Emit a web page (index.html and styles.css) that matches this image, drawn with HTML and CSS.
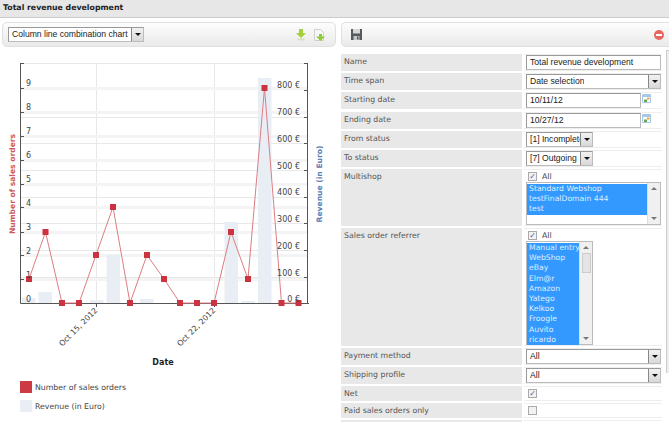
FILE: index.html
```html
<!DOCTYPE html>
<html lang="en">
<head>
    <meta charset="UTF-8">
    <title>Total revenue development</title>
    <link rel="stylesheet" href="styles.css">
</head>
<body>

    <div class="title-bar">Total revenue development</div>

    <div class="columns">
        <div class="left-panel">
            <div class="toolbar">
                <div class="select chart-select"><span class="select-text">Column line combination chart</span><span class="arrow"></span></div>
                <div class="toolbar-icons">
                    <svg width="10" height="12" viewBox="0 0 10 12"><path d="M3 0h4v4h3L5 9 0 4h3z" fill="#a3d13c"/><path d="M1.500 10.500h7" stroke="#d5dfc4" stroke-width="2"/></svg>
                    <svg width="11" height="12" viewBox="0 0 11 12"><path d="M.5.500h6l3 3v8H.5z" fill="#f6f6f6" stroke="#cfcfcf"/><path d="M5 5h3v2.500h3L6.500 12 2 7.500h3z" fill="#8fcb3a"/></svg>
                </div>
            </div>

            <svg class="chart" width="334" height="320" viewBox="0 48 334 320">
                <g class="grid-thin">
                    <path d="M20 63.500H307"/>
                    <path d="M20 117.500H307M20 143.500H307M20 170.500H307M20 197.500H307M20 223.500H307M20 250.500H307M20 277.500H307"/>
                    <path d="M96.500 63V303M214.500 63V303"/>
                </g>
                <g class="grid-soft">
                    <path d="M20 88.500H307M20 112.500H307M20 136.500H307M20 160.500H307M20 184.500H307M20 207.500H307M20 232.500H307M20 255.500H307M20 279.500H307"/>
                </g>

                <g class="bars">
                    <rect x="22" y="298" width="13.500" height="5"/>
                    <rect x="38.500" y="292" width="13.500" height="11"/>
                    <rect x="90" y="300" width="13.500" height="3"/>
                    <rect x="106.500" y="255" width="13.500" height="48"/>
                    <rect x="140" y="299" width="13.500" height="4"/>
                    <rect x="224.500" y="222" width="13.500" height="81"/>
                    <rect x="241.500" y="301" width="13.500" height="2"/>
                    <rect x="258" y="78" width="13.500" height="225"/>
                </g>

                <g class="axis">
                    <path d="M20.500 63V303.500H309M307.500 63V303.500"/>
                    <path d="M20 63.500h4M304 63.500h4"/>
                    <path d="M20 88.500h4M20 112.500h4M20 136.500h4M20 160.500h4M20 184.500h4M20 207.500h4M20 232.500h4M20 255.500h4M20 279.500h4"/>
                    <path d="M304 90.500h4M304 117.500h4M304 143.500h4M304 170.500h4M304 197.500h4M304 223.500h4M304 250.500h4M304 277.500h4"/>
                    <path d="M96.500 303v4M214.500 303v4"/>
                </g>

                <polyline class="line" points="29,279 45.500,232 62,303 79,303 96,255 113,207 130,303 147,255 164,279 180,303 197,303 214,303 231,232 248,279 264.500,88 281.500,303 298.500,303"/>
                <g class="points">
                    <rect x="26" y="276" width="6" height="6"/>
                    <rect x="42.500" y="229" width="6" height="6"/>
                    <rect x="59" y="300" width="6" height="6"/>
                    <rect x="76" y="300" width="6" height="6"/>
                    <rect x="93" y="252" width="6" height="6"/>
                    <rect x="110" y="204" width="6" height="6"/>
                    <rect x="127" y="300" width="6" height="6"/>
                    <rect x="144" y="252" width="6" height="6"/>
                    <rect x="161" y="276" width="6" height="6"/>
                    <rect x="177" y="300" width="6" height="6"/>
                    <rect x="194" y="300" width="6" height="6"/>
                    <rect x="211" y="300" width="6" height="6"/>
                    <rect x="228" y="229" width="6" height="6"/>
                    <rect x="245" y="276" width="6" height="6"/>
                    <rect x="261.500" y="85" width="6" height="6"/>
                    <rect x="278.500" y="300" width="6" height="6"/>
                    <rect x="295.500" y="300" width="6" height="6"/>
                </g>

                <g class="tick-text">
                    <text x="26" y="86">9</text>
                    <text x="26" y="110">8</text>
                    <text x="26" y="134">7</text>
                    <text x="26" y="158">6</text>
                    <text x="26" y="182">5</text>
                    <text x="26" y="206">4</text>
                    <text x="26" y="230">3</text>
                    <text x="26" y="254">2</text>
                    <text x="26" y="278">1</text>
                    <text x="26" y="302">0</text>
                </g>
                <g class="tick-text right">
                    <text x="300" y="88">800 €</text>
                    <text x="300" y="115">700 €</text>
                    <text x="300" y="142">600 €</text>
                    <text x="300" y="169">500 €</text>
                    <text x="300" y="195">400 €</text>
                    <text x="300" y="222">300 €</text>
                    <text x="300" y="249">200 €</text>
                    <text x="300" y="276">100 €</text>
                    <text x="300" y="302">0 €</text>
                </g>

                <text class="axis-title red" transform="translate(15 184) rotate(-90)">Number of sales orders</text>
                <text class="axis-title blue" transform="translate(322 184) rotate(-90)">Revenue (in Euro)</text>
                <text class="date-label" transform="translate(98 311) rotate(-45)">Oct 15, 2012</text>
                <text class="date-label" transform="translate(216 311) rotate(-45)">Oct 22, 2012</text>
                <text class="date-title" x="163" y="365">Date</text>
            </svg>

            <div class="legend">
                <div class="legend-row"><span class="swatch swatch-red"></span>Number of sales orders</div>
                <div class="legend-row"><span class="swatch swatch-blue"></span>Revenue (in Euro)</div>
            </div>
        </div>

        <div class="right-panel">
            <div class="toolbar toolbar-right">
                <svg width="11" height="11" viewBox="0 0 11 11"><path d="M0 0h11v11H0z" fill="#55595c"/><path d="M2 0h7v4.500H2z" fill="#d5d8da"/><path d="M2.500 7h6v4h-6z" fill="#c4c7ca"/><path d="M6 7.500h1.500v3H6z" fill="#55595c"/></svg>
                <svg width="10" height="10" viewBox="0 0 10 10"><circle cx="5" cy="5" r="5" fill="#e8675e"/><path d="M2 5h6" stroke="#fff" stroke-width="2"/></svg>
            </div>

            <div class="form-wrap">
                <div class="form">
                    <div class="row">
                        <div class="label">Name</div>
                        <div class="value"><div class="input input-wide">Total revenue development</div></div>
                    </div>
                    <div class="row">
                        <div class="label">Time span</div>
                        <div class="value"><div class="select select-wide"><span class="select-text">Date selection</span><span class="arrow"></span></div></div>
                    </div>
                    <div class="row row-date">
                        <div class="label">Starting date</div>
                        <div class="value date-value">
                            <div class="input input-date">10/11/12</div>
                            <svg class="cal" width="9" height="9" viewBox="0 0 9 9"><path d="M.5.500h8v8h-8z" fill="#fff" stroke="#a8c8e8"/><path d="M1 1h7v2H1z" fill="#a8c8e8"/><path d="M5 3.500h2.500v2H5z" fill="#e9a33f"/><path d="M2 5.500h3V8H2z" fill="#6aa84f"/></svg>
                        </div>
                    </div>
                    <div class="row">
                        <div class="label">Ending date</div>
                        <div class="value date-value">
                            <div class="input input-date">10/27/12</div>
                            <svg class="cal" width="9" height="9" viewBox="0 0 9 9"><path d="M.5.500h8v8h-8z" fill="#fff" stroke="#a8c8e8"/><path d="M1 1h7v2H1z" fill="#a8c8e8"/><path d="M5 3.500h2.500v2H5z" fill="#e9a33f"/><path d="M2 5.500h3V8H2z" fill="#6aa84f"/></svg>
                        </div>
                    </div>
                    <div class="row">
                        <div class="label">From status</div>
                        <div class="value"><div class="select select-status"><span class="select-text">[1] Incomplete</span><span class="arrow"></span></div></div>
                    </div>
                    <div class="row">
                        <div class="label">To status</div>
                        <div class="value"><div class="select select-status"><span class="select-text">[7] Outgoing</span><span class="arrow"></span></div></div>
                    </div>
                    <div class="row">
                        <div class="label">Multishop</div>
                        <div class="value">
                            <div class="check-line"><span class="check checked">✓</span>All</div>
                            <div class="listbox listbox-wide">
                                <div class="options">
                                    <div class="option">Standard Webshop</div>
                                    <div class="option">testFinalDomain 444</div>
                                    <div class="option">test</div>
                                </div>
                                <div class="list-scroll"><span class="up"></span><span class="down"></span></div>
                            </div>
                        </div>
                    </div>
                    <div class="row">
                        <div class="label">Sales order referrer</div>
                        <div class="value">
                            <div class="check-line"><span class="check checked">✓</span>All</div>
                            <div class="listbox listbox-narrow">
                                <div class="options">
                                    <div class="option">Manual entry</div>
                                    <div class="option">WebShop</div>
                                    <div class="option">eBay</div>
                                    <div class="option">Elm@r</div>
                                    <div class="option">Amazon</div>
                                    <div class="option">Yatego</div>
                                    <div class="option">Kelkoo</div>
                                    <div class="option">Froogle</div>
                                    <div class="option">Auvito</div>
                                    <div class="option">ricardo</div>
                                </div>
                                <div class="list-scroll"><span class="up"></span><span class="thumb"></span><span class="down"></span></div>
                            </div>
                        </div>
                    </div>
                    <div class="row">
                        <div class="label">Payment method</div>
                        <div class="value"><div class="select select-wide"><span class="select-text">All</span><span class="arrow"></span></div></div>
                    </div>
                    <div class="row">
                        <div class="label">Shipping profile</div>
                        <div class="value"><div class="select select-wide"><span class="select-text">All</span><span class="arrow"></span></div></div>
                    </div>
                    <div class="row row-check">
                        <div class="label">Net</div>
                        <div class="value"><span class="check checked">✓</span></div>
                    </div>
                    <div class="row row-check">
                        <div class="label">Paid sales orders only</div>
                        <div class="value"><span class="check"></span></div>
                    </div>
                    <div class="row row-check">
                        <div class="label"></div>
                        <div class="value"></div>
                    </div>
                </div>
                <div class="page-scroll"></div>
            </div>
        </div>
    </div>

</body>
</html>
```

FILE: styles.css
```css
html, body {
    margin: 0;
    padding: 0;
    height: 422px;
    overflow: hidden;
    background: #fff;
}
body {
    font-family: "DejaVu Sans", Verdana, sans-serif;
    font-size: 7.8px;
    color: #555;
}
.title-bar {
    height: 17px;
    padding-left: 3px;
    line-height: 15px;
    font-weight: bold;
    color: #222;
    background: #e7e7e7;
    border-bottom: 1px solid #ccc;
}
.columns {
    display: flex;
    padding-top: 4px;
}
.left-panel {
    width: 334px;
    margin-left: 2px;
}
.right-panel {
    width: 328px;
    margin-left: 5px;
}
.toolbar {
    display: flex;
    align-items: center;
    justify-content: space-between;
    height: 23px;
    padding: 0 10px 0 5px;
    border: 1px solid #e0e0e0;
    border-radius: 5px;
    background: linear-gradient(#fdfdfd, #eaeaea);
}
.toolbar-right {
    padding: 0 5px 0 9px;
    border-right: none;
    border-radius: 5px 0 0 5px;
}
.toolbar-icons {
    display: flex;
    gap: 8px;
}
.chart {
    display: block;
    margin-left: -2px;
    margin-top: 1px;
}
.grid-thin path {
    fill: none;
    stroke: #e8e8e8;
}
.grid-soft path {
    fill: none;
    stroke: #f4f4f4;
    stroke-width: 3;
}
.bars rect {
    fill: #e9eef5;
}
.axis path {
    fill: none;
    stroke: #555;
}
.line {
    fill: none;
    stroke: #dc7d82;
    stroke-width: 1;
}
.points rect {
    fill: #cc3340;
}
.tick-text text {
    font-size: 8px;
    fill: #444;
}
.tick-text.right text {
    text-anchor: end;
}
.axis-title {
    font-size: 7.6px;
    font-weight: bold;
    text-anchor: middle;
}
.axis-title.red {
    fill: #cc5a60;
}
.axis-title.blue {
    fill: #5a80b5;
}
.date-label {
    font-size: 7.8px;
    fill: #444;
    text-anchor: end;
}
.date-title {
    font-size: 8px;
    font-weight: bold;
    fill: #222;
    text-anchor: middle;
}
.legend {
    margin-left: 18px;
    margin-top: 13px;
    display: flex;
    flex-direction: column;
    gap: 7px;
}
.legend-row {
    display: flex;
    align-items: center;
    gap: 3px;
    height: 12px;
    color: #444;
}
.swatch {
    width: 12px;
    height: 12px;
}
.swatch-red {
    background: #cc3a44;
}
.swatch-blue {
    background: #e9eef5;
}

/* form */
.form-wrap {
    display: flex;
    margin-top: 3px;
    height: 372px;
}
.form {
    width: 321px;
    padding-top: 4px;
    box-sizing: border-box;
    overflow: hidden;
}
.page-scroll {
    width: 2px;
    height: 322px;
    margin-left: 4px;
    background: #eee;
    border-left: 1px solid #ccc;
    border-top: 1px solid #ccc;
}
.row {
    display: flex;
    margin-bottom: 2px;
}
.row-date {
    margin-bottom: 3px;
}
.label {
    width: 181px;
    padding: 3px 3px 0;
    box-sizing: border-box;
    background: #e8e8e8;
    flex-shrink: 0;
}
.value {
    flex: 1;
    margin-left: 2px;
    padding-left: 2px;
    border-top: 1px solid #eee;
    border-bottom: 1px solid #eee;
    min-height: 15px;
}
.row-check .value {
    min-height: 13px;
}
.date-value {
    display: flex;
    gap: 1px;
}
.cal {
    margin-top: 1px;
}
.input, .select {
    font-family: "Liberation Sans", Arial, sans-serif;
    font-size: 8.6px;
    color: #222;
    box-sizing: border-box;
    height: 15px;
    line-height: 13px;
    border: 1px solid #999;
    border-right-color: #bbb;
    border-bottom-color: #bbb;
    background: #fff;
}
.input {
    padding-left: 3px;
}
.input-wide {
    width: 135px;
}
.input-date {
    width: 115px;
}
.select {
    display: flex;
    justify-content: space-between;
    align-items: center;
    padding-left: 3px;
    overflow: hidden;
    white-space: nowrap;
}
.select-text {
    overflow: hidden;
}
.select-wide {
    width: 135px;
}
.select-status {
    width: 67px;
}
.chart-select {
    width: 136px;
    flex-shrink: 0;
}
.arrow {
    position: relative;
    flex-shrink: 0;
    width: 11px;
    height: 13px;
    background: linear-gradient(#f2f2f2, #d8d8d8);
    border-left: 1px solid #888;
}
.arrow::after {
    content: "";
    position: absolute;
    left: 2.500px;
    top: 5px;
    border: 3px solid transparent;
    border-top: 3px solid #111;
    border-bottom: none;
}
.check-line {
    display: flex;
    align-items: center;
    gap: 5px;
    height: 12px;
    color: #444;
}
.check {
    display: inline-block;
    box-sizing: border-box;
    width: 9px;
    height: 9px;
    border: 1px solid #aaa;
    background: #f2f2f2;
    color: #4a5aa8;
    font-size: 8px;
    line-height: 7px;
    text-align: center;
    margin-left: 2px;
    margin-top: 2px;
}
.check-line .check {
    margin-top: 0;
}
.listbox {
    display: flex;
    border: 1px solid #bbb;
    background: #fff;
    font-size: 7.7px;
    color: #dfefff;
    box-sizing: border-box;
}
.listbox-wide {
    width: 135px;
    height: 43px;
}
.listbox-narrow {
    width: 67px;
    height: 104px;
}
.options {
    flex: 1;
    padding-top: 1px;
    min-width: 0;
}
.option {
    height: 10.200px;
    line-height: 10px;
    padding-left: 2px;
    background: #3399ff;
    white-space: nowrap;
}
.list-scroll {
    width: 13px;
    background: #f0f0f0;
    border-left: 1px solid #ddd;
    display: flex;
    flex-direction: column;
    align-items: center;
    box-sizing: border-box;
    padding: 4px 0;
}
.up {
    border: 3px solid transparent;
    border-bottom: 3px solid #777;
    border-top: none;
}
.down {
    border: 3px solid transparent;
    border-top: 3px solid #777;
    border-bottom: none;
    margin-top: auto;
}
.thumb {
    width: 9px;
    height: 20px;
    margin-top: 4px;
    background: #e4e4e4;
    border: 1px solid #ccc;
    box-sizing: border-box;
}
```
